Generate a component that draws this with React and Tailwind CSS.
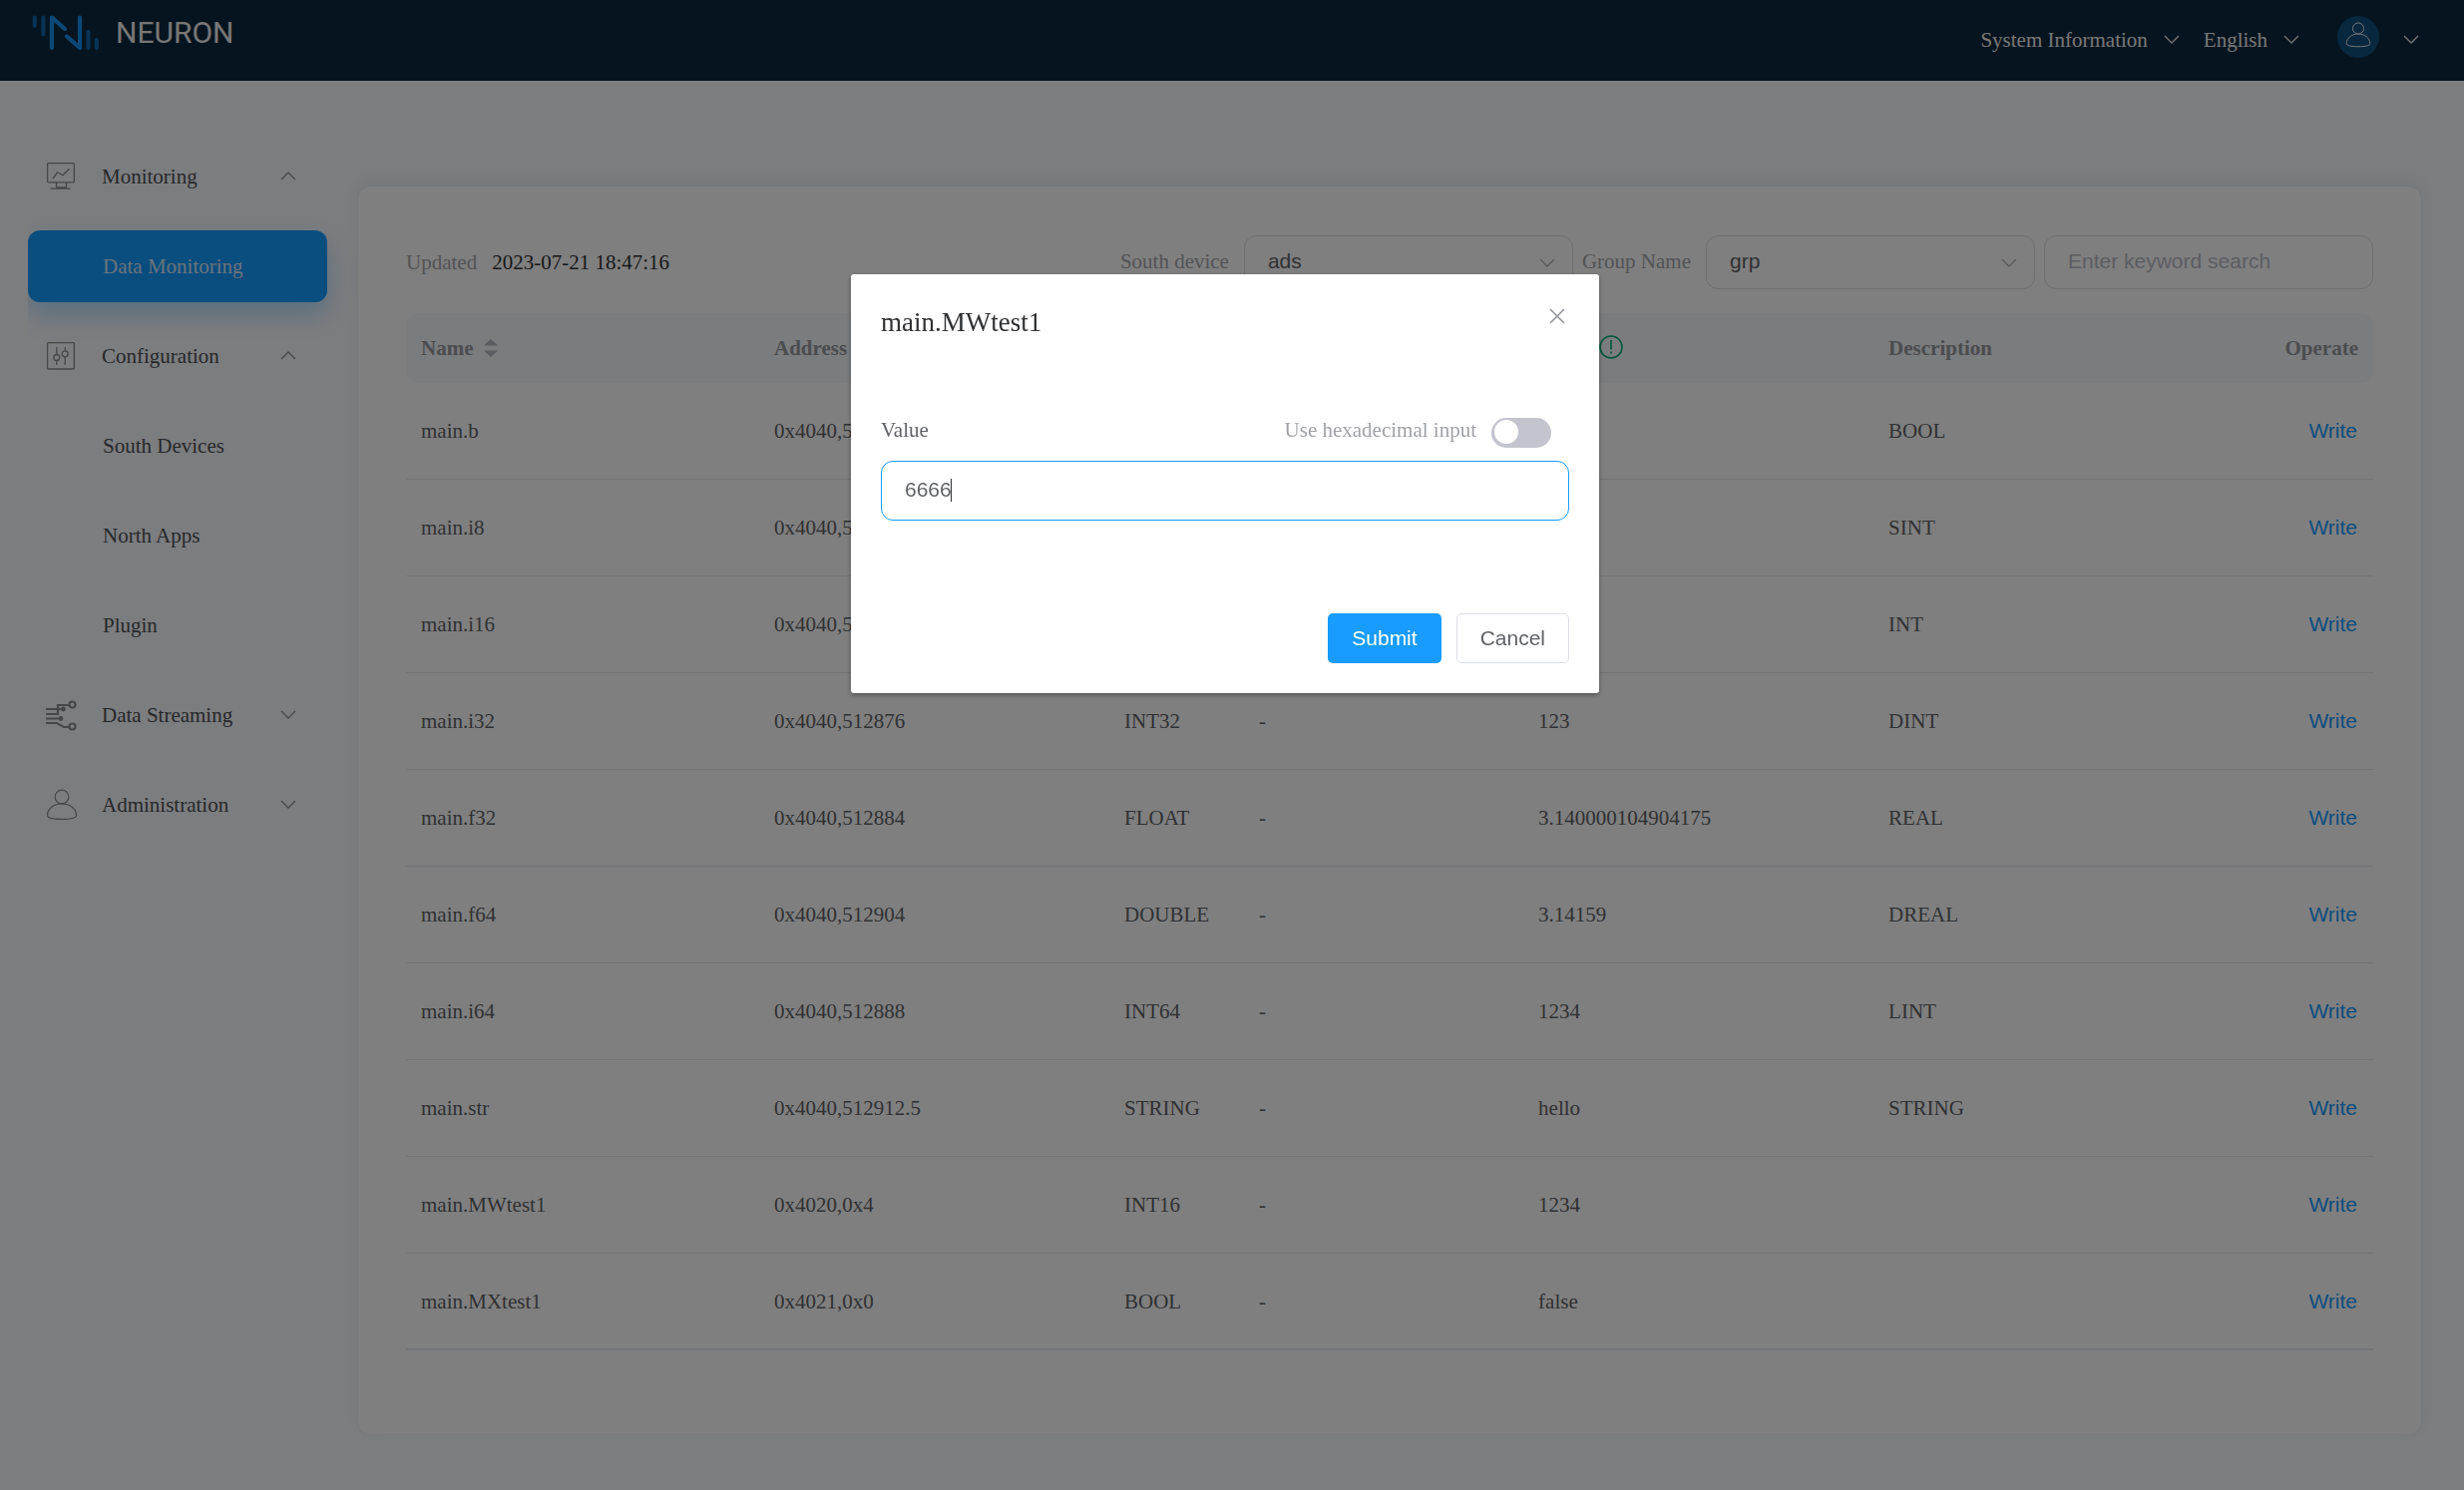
import React, { useState } from "react";

const rows = [
  ["main.b", "0x4040,5", "BOOL", "-", "", "BOOL"],
  ["main.i8", "0x4040,5", "INT8", "-", "", "SINT"],
  ["main.i16", "0x4040,5", "INT16", "-", "", "INT"],
  ["main.i32", "0x4040,512876", "INT32", "-", "123", "DINT"],
  ["main.f32", "0x4040,512884", "FLOAT", "-", "3.140000104904175", "REAL"],
  ["main.f64", "0x4040,512904", "DOUBLE", "-", "3.14159", "DREAL"],
  ["main.i64", "0x4040,512888", "INT64", "-", "1234", "LINT"],
  ["main.str", "0x4040,512912.5", "STRING", "-", "hello", "STRING"],
  ["main.MWtest1", "0x4020,0x4", "INT16", "-", "1234", ""],
  ["main.MXtest1", "0x4021,0x0", "BOOL", "-", "false", ""],
];

function Chevron({ up = false, className = "" }) {
  return (
    <svg viewBox="0 0 16 9" fill="none" stroke="currentColor" strokeWidth="1.3" className={`h-[9px] w-4 shrink-0 ${className}`} aria-hidden="true">
      <path d={up ? "M1 8 8 1l7 7" : "M1 1l7 7 7-7"} />
    </svg>
  );
}

function UserIcon({ className }) {
  return (
    <svg viewBox="0 0 32 32" fill="none" stroke="currentColor" strokeWidth="1.2" className={className} aria-hidden="true">
      <circle cx="16" cy="8" r="6.8" />
      <path d="M16 14.8C8 14.8 1.5 20 1.5 26.500c0 2.900 5.500 3.900 14.500 3.900s14.500-1 14.500-3.900C30.500 20 24 14.800 16 14.800Z" />
    </svg>
  );
}

function MonitorIcon() {
  return (
    <svg viewBox="0 0 30 30" fill="none" stroke="currentColor" strokeWidth="1.3" className="h-[30px] w-[30px]" aria-hidden="true">
      <rect x="1.600" y="1.600" width="26.800" height="19.200" rx="1" />
      <path d="M7 17l4.500-6.200 5.500 3 6.500-6.600M10.500 21v6M20.500 21v6M4.500 27.200h20M10.500 26h10" />
    </svg>
  );
}

function ConfigIcon() {
  return (
    <svg viewBox="0 0 30 30" fill="none" stroke="currentColor" strokeWidth="1.3" className="h-[30px] w-[30px]" aria-hidden="true">
      <rect x="1.600" y="1.600" width="26.800" height="26.400" rx="1" />
      <path d="M10.800 6v7.500M10.800 19.500V24M19.200 6v3.500M19.200 16v8" />
      <circle cx="10.800" cy="16.500" r="3" />
      <circle cx="19.200" cy="12.800" r="3" />
    </svg>
  );
}

function StreamIcon() {
  return (
    <svg viewBox="0 0 32 32" fill="none" stroke="currentColor" strokeWidth="2.200" className="h-8 w-8" aria-hidden="true">
      <path d="M0 10h17M0 15h12V6h11M0 19.500h14M0 24h11l7 4h5" />
      <circle cx="17.500" cy="10" r="1.300" fill="currentColor" />
      <circle cx="15" cy="19.500" r="1.300" fill="currentColor" />
      <circle cx="26.500" cy="5.500" r="3" />
      <circle cx="26.500" cy="27.500" r="3" />
    </svg>
  );
}

function Group({ icon, label, open }) {
  return (
    <button type="button" aria-expanded={open} className="flex h-[72px] w-full items-center text-left text-[#4e5054]">
      <span className="flex w-[74px] items-center pl-[18px] text-[#8c8e92]">{icon}</span>
      <span className="flex-1">{label}</span>
      <Chevron up={open} className="mb-[2px] mr-[31px] text-[#8c8e92]" />
    </button>
  );
}

function SubItem({ label, active }) {
  return (
    <a
      href="#"
      aria-current={active ? "page" : undefined}
      className={
        active
          ? "flex h-[72px] items-center rounded-xl bg-[#159aff] pl-[75px] text-[#d5e8f8] shadow-[0_12px_24px_rgba(24,155,255,0.3)]"
          : "flex h-[72px] items-center pl-[75px] text-[#4e5054]"
      }
    >
      {label}
    </a>
  );
}

function Select({ id, label, value, className = "" }) {
  return (
    <div className={`flex items-center gap-[15px] ${className}`}>
      <label htmlFor={id} className="pb-[2px] text-[#a6a7ab]">{label}</label>
      <div className="relative">
        <select id={id} defaultValue={value} className="h-[54px] w-[330px] appearance-none rounded-xl border border-[#dcdde6] bg-white pb-[2px] pl-[23px] pr-12 font-['Liberation_Sans',sans-serif] text-[#606266]">
          <option>{value}</option>
        </select>
        <Chevron className="pointer-events-none absolute right-[18px] top-[23px] text-[#b0b2ba]" />
      </div>
    </div>
  );
}

function Header() {
  return (
    <header className="flex h-[81px] items-center bg-[#0b283d] pl-8 pr-[45px] text-[#eeeeee]">
      <a href="#" className="flex items-center gap-4 self-start pt-[14px]">
        <svg viewBox="0 0 68 38" fill="none" strokeLinecap="round" strokeLinejoin="round" strokeWidth="4.200" className="h-[38px] w-[68px]" aria-hidden="true">
          <path stroke="#0d66ad" d="M2.800 3.500V12M11.400 3.500V20.500M56.400 18V34M64.800 26V34" />
          <path stroke="#1390ec" d="M20 34V3.500L33 15M35 22.500 48 34V3.500" />
        </svg>
        <span className="font-[Roboto,sans-serif] text-[30px] leading-9">NEURON</span>
      </a>
      <div className="ml-auto flex items-center pb-[2px]">
        <button type="button" className="flex items-center gap-4">System Information <Chevron /></button>
        <button type="button" className="ml-6 flex items-center gap-4">English <Chevron /></button>
        <button type="button" aria-label="Account" className="ml-[38px] flex items-center gap-[24px]">
          <span className="mb-[6px] flex h-[42px] w-[42px] items-center justify-center rounded-full bg-[#115181]">
            <UserIcon className="mb-1 h-[26px] w-[26px]" />
          </span>
          <Chevron />
        </button>
      </div>
    </header>
  );
}

function TagTable() {
  return (
    <table className="w-full table-fixed border-separate border-spacing-0 text-left text-[#606266]">
      <colgroup>
        <col className="w-[17.95%]" />
        <col className="w-[17.8%]" />
        <col className="w-[6.85%]" />
        <col className="w-[14.2%]" />
        <col className="w-[17.8%]" />
        <col />
      </colgroup>
      <thead>
        <tr className="h-[70px] text-[#97999d] [&>th]:bg-[#f6f8fc] [&>th]:px-[15px]">
          <th className="rounded-l-xl">
            <span className="flex items-center gap-[11px]">
              Name
              <svg viewBox="0 0 14 18" className="h-[18px] w-[14px]" fill="#b6b8c0" aria-hidden="true">
                <path d="M7 0l7 6.500H0ZM7 18l7-6.500H0Z" />
              </svg>
            </span>
          </th>
          <th>Address</th>
          <th>Type</th>
          <th>Unit</th>
          <th>
            <span className="flex items-center gap-[10px]">
              Value
              <svg viewBox="0 0 24 24" className="mb-[3px] h-6 w-6 shrink-0 text-[#00b173]" fill="none" stroke="currentColor" strokeWidth="1.600" aria-hidden="true">
                <circle cx="12" cy="12" r="11" />
                <path d="M12 5v9.500M12 16.500v2" />
              </svg>
            </span>
          </th>
          <th className="rounded-r-xl">
            <span className="flex justify-between">
              <span>Description</span>
              <span>Operate</span>
            </span>
          </th>
        </tr>
      </thead>
      <tbody>
        {rows.map((r) => (
          <tr key={r[0]} className="h-[97px] last:[&>td]:border-b-2 [&>td]:border-b [&>td]:border-[#e9eaf1] [&>td]:px-[15px]">
            {r.slice(0, 5).map((c, j) => (
              <td key={j}>{c}</td>
            ))}
            <td>
              <span className="flex justify-between">
                <span>{r[5]}</span>
                <button type="button" className="pr-px font-['Liberation_Sans',sans-serif] text-[#159aff]">Write</button>
              </span>
            </td>
          </tr>
        ))}
      </tbody>
    </table>
  );
}

function WriteDialog() {
  const [value, setValue] = useState("6666");
  return (
    <div className="fixed inset-0 flex items-start justify-center bg-black/50 pr-[14px] pt-[275px]">
      <div role="dialog" aria-modal="true" aria-labelledby="dialog-title" className="flex w-[750px] flex-col rounded-[3px] bg-white p-[30px] shadow-[0_2px_5px_rgba(0,0,0,0.35)]">
        <div className="flex items-start justify-between">
          <h2 id="dialog-title" className="text-[27px] leading-9 text-[#303133]">main.MWtest1</h2>
          <button type="button" aria-label="Close" className="p-1">
            <svg viewBox="0 0 16 16" className="h-4 w-4" fill="none" stroke="#909399" strokeWidth="1.500" aria-hidden="true">
              <path d="M1 1l14 14M15 1L1 15" />
            </svg>
          </button>
        </div>
        <div className="mt-[75px] flex h-9 items-center justify-between pr-[18px]">
          <label htmlFor="value" className="pb-[6px] text-[#606266]">Value</label>
          <label className="flex items-center gap-[15px] text-[#a0a2a6]">
            <span className="pb-[6px]">Use hexadecimal input</span>
            <span className="relative flex">
              <input type="checkbox" role="switch" className="peer h-[30px] w-[60px] appearance-none rounded-full bg-[#c4c4cf] checked:bg-[#159aff]" />
              <span className="pointer-events-none absolute left-[3px] top-[2px] h-6 w-6 rounded-full bg-white peer-checked:left-[33px]" />
            </span>
          </label>
        </div>
        <div className="relative mt-[10px] flex">
          <input id="value" value={value} onChange={(e) => setValue(e.target.value)} className="h-[60px] w-full rounded-xl border border-[#189cff] px-[23px] pb-[3px] font-['Liberation_Sans',sans-serif] text-[#606266] caret-transparent outline-none" />
          <span className="pointer-events-none absolute left-[70px] top-[18px] h-[23px] w-px bg-[#303133]" />
        </div>
        <div className="mt-[93px] flex justify-end gap-[15px] font-['Liberation_Sans',sans-serif]">
          <button type="button" className="h-[50px] rounded-[5px] bg-[#189cff] px-6 text-white">Submit</button>
          <button type="button" className="h-[50px] rounded-[5px] border border-[#dcdfe6] px-[23px] text-[#606266]">Cancel</button>
        </div>
      </div>
    </div>
  );
}

export default function App() {
  return (
    <div className="min-h-screen bg-[#f8fafe] font-['Liberation_Serif',serif] text-[21px] leading-[30px]">
      <Header />
      <div className="flex items-start pl-7 pr-[43px]">
        <nav className="flex w-[300px] shrink-0 flex-col gap-[18px] pt-[60px] [clip-path:inset(0_-40px_-40px_0)]">
          <Group icon={<MonitorIcon />} label="Monitoring" open />
          <SubItem label="Data Monitoring" active />
          <Group icon={<ConfigIcon />} label="Configuration" open />
          <SubItem label="South Devices" />
          <SubItem label="North Apps" />
          <SubItem label="Plugin" />
          <Group icon={<StreamIcon />} label="Data Streaming" open={false} />
          <Group icon={<UserIcon className="h-8 w-8" />} label="Administration" open={false} />
        </nav>
        <main className="ml-[31px] mt-[106px] min-w-0 flex-1 rounded-xl bg-white px-12 pb-[84px] pt-[49px] shadow-[0_0_1px_rgba(90,90,150,0.25),0_-6px_14px_rgba(90,110,120,0.07)]">
          <div className="mb-6 flex items-center">
            <p className="flex gap-[15px]">
              <span className="text-[#a6a7ab]">Updated</span>
              <time className="text-[#303133]">2023-07-21 18:47:16</time>
            </p>
            <Select id="south-device" label="South device" value="ads" className="ml-auto" />
            <Select id="group-name" label="Group Name" value="grp" className="ml-[9px]" />
            <input type="text" aria-label="Keyword" placeholder="Enter keyword search" className="ml-[9px] h-[54px] w-[330px] rounded-xl border border-[#dcdde6] px-[23px] pb-[3px] font-['Liberation_Sans',sans-serif] placeholder:text-[#b9bbc3]" />
          </div>
          <TagTable />
        </main>
      </div>
      <WriteDialog />
    </div>
  );
}
